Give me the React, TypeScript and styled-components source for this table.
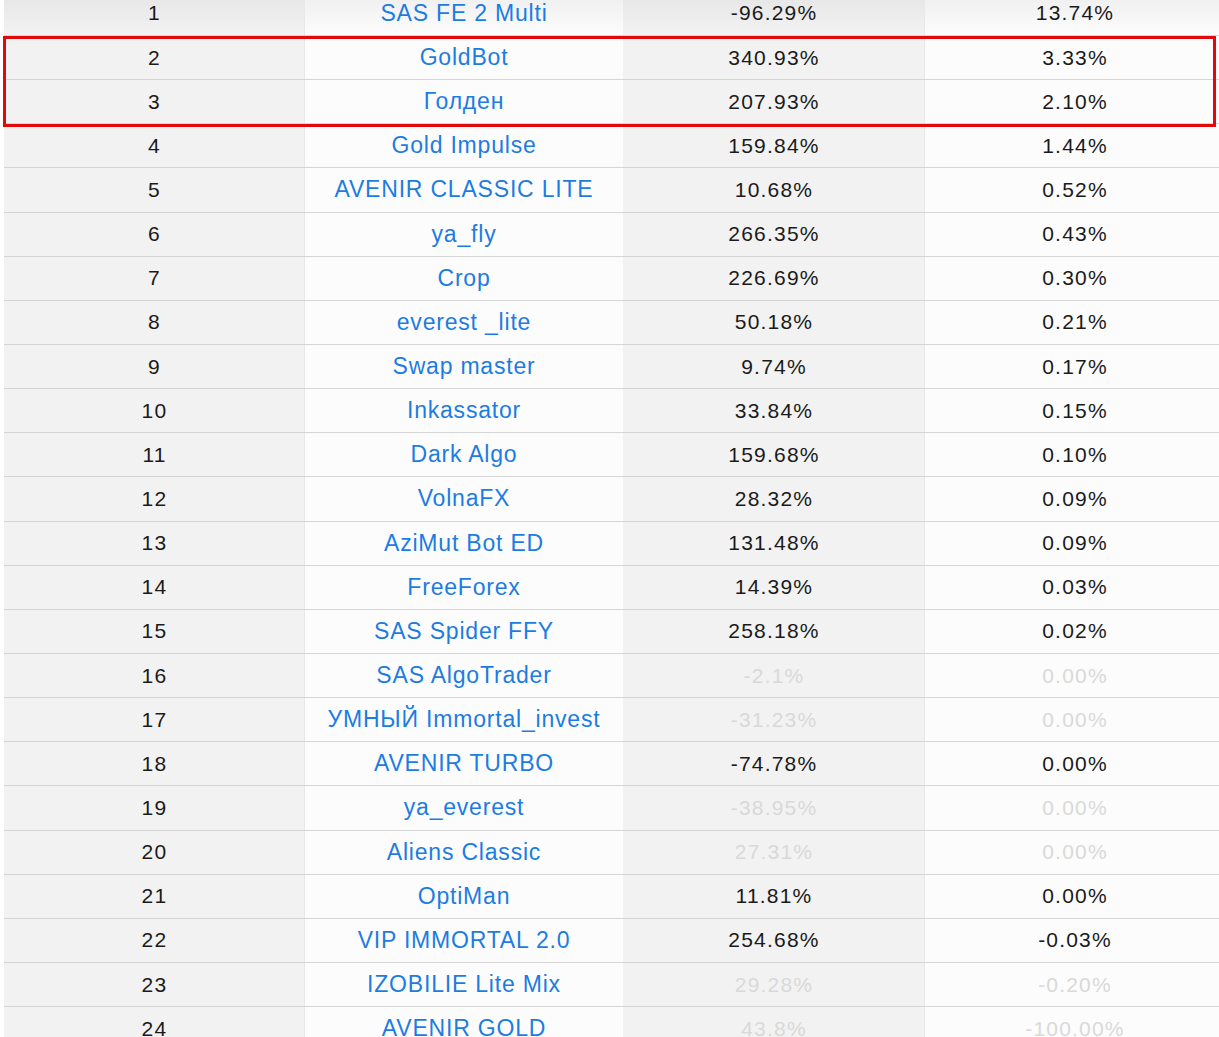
import React from "react";
import styled, { createGlobalStyle } from "styled-components";

type Rank = { name: string; gain: string; share: string; muted?: boolean };

const ranks: Rank[] = [
  { name: "SAS FE 2 Multi", gain: "-96.29%", share: "13.74%" },
  { name: "GoldBot", gain: "340.93%", share: "3.33%" },
  { name: "Голден", gain: "207.93%", share: "2.10%" },
  { name: "Gold Impulse", gain: "159.84%", share: "1.44%" },
  { name: "AVENIR CLASSIC LITE", gain: "10.68%", share: "0.52%" },
  { name: "ya_fly", gain: "266.35%", share: "0.43%" },
  { name: "Crop", gain: "226.69%", share: "0.30%" },
  { name: "everest _lite", gain: "50.18%", share: "0.21%" },
  { name: "Swap master", gain: "9.74%", share: "0.17%" },
  { name: "Inkassator", gain: "33.84%", share: "0.15%" },
  { name: "Dark Algo", gain: "159.68%", share: "0.10%" },
  { name: "VolnaFX", gain: "28.32%", share: "0.09%" },
  { name: "AziMut Bot ED", gain: "131.48%", share: "0.09%" },
  { name: "FreeForex", gain: "14.39%", share: "0.03%" },
  { name: "SAS Spider FFY", gain: "258.18%", share: "0.02%" },
  { name: "SAS AlgoTrader", gain: "-2.1%", share: "0.00%", muted: true },
  { name: "УМНЫЙ Immortal_invest", gain: "-31.23%", share: "0.00%", muted: true },
  { name: "AVENIR TURBO", gain: "-74.78%", share: "0.00%" },
  { name: "ya_everest", gain: "-38.95%", share: "0.00%", muted: true },
  { name: "Aliens Classic", gain: "27.31%", share: "0.00%", muted: true },
  { name: "OptiMan", gain: "11.81%", share: "0.00%" },
  { name: "VIP IMMORTAL 2.0", gain: "254.68%", share: "-0.03%" },
  { name: "IZOBILIE Lite Mix", gain: "29.28%", share: "-0.20%", muted: true },
  { name: "AVENIR GOLD", gain: "43.8%", share: "-100.00%", muted: true },
];

const GlobalStyle = createGlobalStyle`
  html, body {
    margin: 0;
    padding: 0;
    background: #ffffff;
    overflow: hidden;
  }
  body {
    font-family: "Liberation Sans", Arial, sans-serif;
  }
`;

const Page = styled.main`
  width: 1219px;
  height: 1037px;
  overflow: hidden;
  padding-left: 4px;
  box-sizing: border-box;
`;

const Table = styled.div`
  position: relative;
  width: 1221px;
  margin-top: -8.15px;
`;

const Row = styled.div`
  display: grid;
  grid-template-columns: 301px 318px 302px 300px;
  height: 44.15px;
  box-sizing: border-box;
  border-bottom: 1px solid #d5d5d5;
`;

const Cell = styled.div<{ $alt?: boolean; $top?: boolean }>`
  display: flex;
  align-items: center;
  justify-content: center;
  padding-left: 1px;
  box-sizing: border-box;
  background-color: ${(p) => (p.$alt ? "#f2f2f2" : "#fcfcfc")};
  background-image: ${(p) =>
    p.$top
      ? "linear-gradient(rgba(0,0,0,0.055), rgba(0,0,0,0.015) 70%, rgba(0,0,0,0))"
      : "none"};
  border-right: 1px solid ${(p) => (p.$alt ? "#e8e8e8" : "transparent")};
  white-space: nowrap;
`;

const Value = styled.span<{ $muted?: boolean }>`
  font-size: 21px;
  letter-spacing: 1.2px;
  color: ${(p) => (p.$muted ? "#d9d9d9" : "#1a1a1a")};
`;

const BotLink = styled.a`
  font-size: 23px;
  letter-spacing: 0.8px;
  color: #1c7ce2;
  text-decoration: none;
  cursor: pointer;
`;

const Highlight = styled.div`
  position: absolute;
  left: -1px;
  top: 44.6px;
  width: 1213px;
  height: 90.8px;
  box-sizing: border-box;
  border: 3px solid #e10a0a;
  pointer-events: none;
`;

export default function App() {
  return (
    <>
      <GlobalStyle />
      <Page>
        <Table>
          {ranks.map((r, i) => (
            <Row key={r.name}>
              <Cell $alt $top={i === 0}>
                <Value>{i + 1}</Value>
              </Cell>
              <Cell $top={i === 0}>
                <BotLink>{r.name}</BotLink>
              </Cell>
              <Cell $alt $top={i === 0}>
                <Value $muted={r.muted}>{r.gain}</Value>
              </Cell>
              <Cell $top={i === 0}>
                <Value $muted={r.muted}>{r.share}</Value>
              </Cell>
            </Row>
          ))}
          <Highlight />
        </Table>
      </Page>
    </>
  );
}
